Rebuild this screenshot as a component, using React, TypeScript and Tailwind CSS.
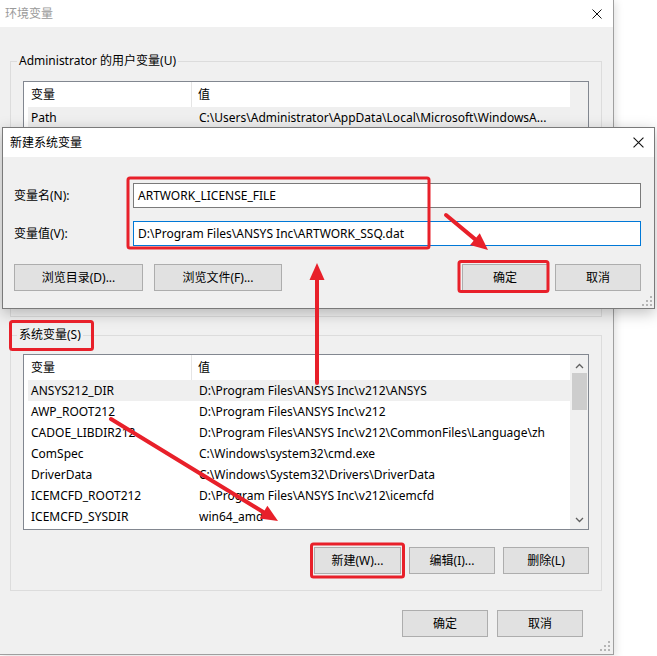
import React from 'react';

const RED = '#e8202a';

const sysRows: [string, string][] = [
  ['ANSYS212_DIR', 'D:\\Program Files\\ANSYS Inc\\v212\\ANSYS'],
  ['AWP_ROOT212', 'D:\\Program Files\\ANSYS Inc\\v212'],
  ['CADOE_LIBDIR212', 'D:\\Program Files\\ANSYS Inc\\v212\\CommonFiles\\Language\\zh'],
  ['ComSpec', 'C:\\Windows\\system32\\cmd.exe'],
  ['DriverData', 'C:\\Windows\\System32\\Drivers\\DriverData'],
  ['ICEMCFD_ROOT212', 'D:\\Program Files\\ANSYS Inc\\v212\\icemcfd'],
  ['ICEMCFD_SYSDIR', 'win64_amd'],
];

// only the first row is visible, the rest sits under the dialog
const userRows: [string, string][] = [
  ['Path', 'C:\\Users\\Administrator\\AppData\\Local\\Microsoft\\WindowsA...'],
];

const CloseIcon = ({ size = 10 }: { size?: number }) => (
  <svg width={size} height={size} viewBox="0 0 10 10">
    <path d="M0.5 0.5 L9.5 9.5 M9.5 0.5 L0.5 9.5" stroke="#111" strokeWidth="1" fill="none" />
  </svg>
);

const Grip = () => (
  <svg width="10" height="10" viewBox="0 0 10 10">
    {[
      [8, 0],
      [4, 4],
      [8, 4],
      [0, 8],
      [4, 8],
      [8, 8],
    ].map(([x, y], i) => (
      <rect key={i} x={x} y={y} width="2" height="2" fill="#b5b5b5" />
    ))}
  </svg>
);

const Button = ({ label, className = '' }: { label: string; className?: string }) => (
  <div
    className={`flex h-[27px] items-center justify-center border border-[#adadad] bg-[#e1e1e1] text-black ${className}`}
  >
    {label}
  </div>
);

// list view with header + rows + vertical scrollbar
const VarList = ({
  rows,
  height,
  scrollbar,
}: {
  rows: [string, string][];
  height: string;
  scrollbar: boolean;
}) => (
  <div className={`flex border border-[#828790] bg-white ${height}`}>
    <div className="flex-1 overflow-hidden pl-[4px]">
      <div className="flex h-[25px] items-center">
        <div className="w-[164px] self-stretch border-r border-[#e5e5e5] pl-[3px] leading-[25px]">变量</div>
        <div className="pl-[6px]">值</div>
      </div>
      {rows.map(([name, value], i) => (
        <div
          key={name}
          className={`flex h-[21px] items-center whitespace-nowrap ${i === 0 ? 'bg-[#efefef]' : ''}`}
        >
          <div className="w-[165px] pl-[3px]">{name}</div>
          <div className="pl-[6px]">{value}</div>
        </div>
      ))}
    </div>
    <div className="flex w-[18px] flex-col items-center bg-[#f0f0f0]">
      {scrollbar && (
        <>
          <svg width="9" height="6" viewBox="0 0 9 6" className="mt-[8px]">
            <path d="M1 5 L4.5 1.5 L8 5" stroke="#606060" strokeWidth="1.3" fill="none" />
          </svg>
          <div className="mt-[4px] h-[37px] w-[15px] bg-[#cdcdcd]" />
          <div className="flex-1" />
          <svg width="9" height="6" viewBox="0 0 9 6" className="mb-[6px]">
            <path d="M1 1 L4.5 4.5 L8 1" stroke="#606060" strokeWidth="1.3" fill="none" />
          </svg>
        </>
      )}
    </div>
  </div>
);

function arrow(x1: number, y1: number, x2: number, y2: number, len = 17, half = 7.5) {
  const dx = x2 - x1;
  const dy = y2 - y1;
  const l = Math.hypot(dx, dy);
  const ux = dx / l;
  const uy = dy / l;
  const bx = x2 - ux * len;
  const by = y2 - uy * len;
  const px = -uy;
  const py = ux;
  return (
    <g>
      <line x1={x1} y1={y1} x2={bx + ux * 2} y2={by + uy * 2} stroke={RED} strokeWidth="4" strokeLinecap="round" />
      <polygon
        points={`${x2},${y2} ${bx + px * half},${by + py * half} ${bx - px * half},${by - py * half}`}
        fill={RED}
      />
    </g>
  );
}

export default function App() {
  return (
    <div className="relative h-[656px] w-[657px] overflow-hidden bg-white font-['Noto_Sans','Noto_Sans_CJK_SC',sans-serif] text-[12px] text-black">
      {/* main window: 环境变量 */}
      <div className="flex h-[655px] w-[614px] flex-col border-r border-b border-[#9f9f9f] bg-[#f0f0f0] shadow-[2px_2px_8px_rgba(0,0,0,0.12)]">
        <div className="flex h-[27px] items-center justify-between bg-white pl-[5px] pr-[11px]">
          <span className="text-[#9a9a9a]">环境变量</span>
          <CloseIcon />
        </div>

        <fieldset className="mx-[10px] mt-[26px] w-[592px] border border-[#dcdcdc] px-[12px] pb-[12px]">
          <legend className="-ml-[6px] h-[16px] px-[2px] leading-[16px]">Administrator 的用户变量(U)</legend>
          <div className="mt-[12px]">
            <VarList rows={userRows} height="h-[186px]" scrollbar={false} />
          </div>
          {/* user buttons row (covered by the dialog) */}
          <div className="mt-[10px] h-[27px]" />
        </fieldset>

        <fieldset className="mx-[10px] mt-[10px] w-[592px] border border-[#dcdcdc] px-[12px] pb-[16px]">
          <legend className="-ml-[6px] h-[16px] px-[2px] leading-[16px]">系统变量(S)</legend>
          <div className="mt-[11px]">
            <VarList rows={sysRows} height="h-[176px]" scrollbar={true} />
          </div>
          <div className="mt-[17px] flex justify-end gap-[8px]">
            <Button label="新建(W)..." className="w-[87px]" />
            <Button label="编辑(I)..." className="w-[86px]" />
            <Button label="删除(L)" className="w-[86px]" />
          </div>
        </fieldset>

        <div className="mt-[19px] flex justify-end gap-[9px] pr-[30px]">
          <Button label="确定" className="w-[86px]" />
          <Button label="取消" className="w-[86px]" />
        </div>
        <div className="flex flex-1 items-end justify-end pr-[3px] pb-[3px]">
          <Grip />
        </div>
      </div>

      {/* dialog: 新建系统变量 */}
      <div className="absolute top-[127px] left-[2px] flex h-[182px] w-[653px] flex-col border border-[#7a7a7a] bg-[#f0f0f0] shadow-[0_4px_14px_rgba(0,0,0,0.25)]">
        <div className="flex h-[29px] shrink-0 items-center justify-between bg-white pl-[7px] pr-[10px]">
          <span>新建系统变量</span>
          <CloseIcon size={11} />
        </div>
        <div className="flex flex-1 flex-col pt-[26px] pl-[11px] pr-[13px]">
          <div className="flex h-[25px] items-center">
            <div className="w-[119px]">变量名(N):</div>
            <div className="flex h-[25px] flex-1 items-center border border-[#7a7a7a] bg-white pl-[4px]">
              ARTWORK_LICENSE_FILE
            </div>
          </div>
          <div className="mt-[13px] flex h-[25px] items-center">
            <div className="w-[119px]">变量值(V):</div>
            <div className="flex h-[25px] flex-1 items-center border border-[#0078d7] bg-white pl-[4px]">
              D:\Program Files\ANSYS Inc\ARTWORK_SSQ.dat
            </div>
          </div>
          <div className="mt-[18px] flex">
            <Button label="浏览目录(D)..." className="w-[129px]" />
            <Button label="浏览文件(F)..." className="ml-[11px] w-[128px]" />
            <div className="flex-1" />
            <Button label="确定" className="w-[86px] border-[#0078d7]" />
            <Button label="取消" className="ml-[7px] w-[86px]" />
          </div>
          <div className="flex flex-1 items-end justify-end pb-[2px] pr-0">
            <div className="-mr-[11px]">
              <Grip />
            </div>
          </div>
        </div>
      </div>

      {/* annotations */}
      <svg className="pointer-events-none absolute inset-0" width="657" height="656" viewBox="0 0 657 656">
        <g fill="none" stroke={RED} strokeWidth="3">
          <rect x="128" y="178" width="301" height="70" rx="2" />
          <rect x="459" y="261.5" width="89" height="30" rx="2" />
          <rect x="10.5" y="321.5" width="82" height="28" rx="2" />
          <rect x="311.5" y="544" width="92" height="33" rx="2" />
        </g>
        {arrow(317, 383, 317, 263)}
        {arrow(446, 215, 488, 250)}
        {arrow(111, 419, 278, 521)}
      </svg>
    </div>
  );
}
